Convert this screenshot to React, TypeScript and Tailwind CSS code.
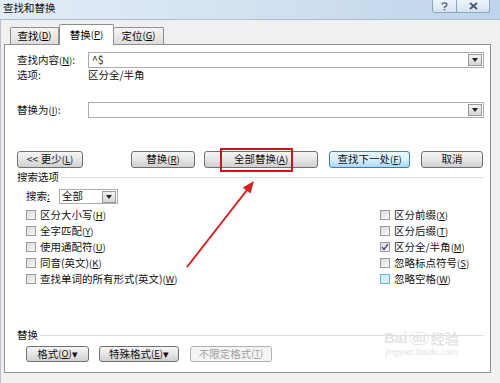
import React from "react";

const F = "font-['SimSun','Noto_Sans_CJK_SC',sans-serif]";

function U({ c }: { c: string }) {
  return (
    <span className="text-[9.5px]">
      (<span className="underline">{c}</span>)
    </span>
  );
}

function Btn({
  children,
  className = "",
  def = false,
  disabled = false,
}: {
  children: React.ReactNode;
  className?: string;
  def?: boolean;
  disabled?: boolean;
}) {
  const base =
    "flex items-center justify-center rounded-[3px] border text-[10.5px] leading-none whitespace-nowrap";
  const look = disabled
    ? "border-[#adb2b5] bg-[#f4f4f4] text-[#a0a0a0]"
    : def
    ? "border-[#3c7fb1] bg-gradient-to-b from-[#eaf6fd] via-[#d9f0fc] to-[#a7d9f5] text-[#111]"
    : "border-[#707070] bg-gradient-to-b from-[#f6f6f6] via-[#e5e5e5] to-[#d0d0d0] text-[#111]";
  return <div className={`${base} ${look} ${className}`}>{children}</div>;
}

function DropBtn() {
  return (
    <div className="w-[14px] h-[12px] mr-[1px] border border-[#9a9a9a] bg-gradient-to-b from-[#f4f4f4] to-[#d6d6d6] flex items-center justify-center">
      <svg width="6" height="4" viewBox="0 0 6 4">
        <polygon points="0,0 6,0 3,4" fill="#222" />
      </svg>
    </div>
  );
}

function Check({
  label,
  checked = false,
  hover = false,
}: {
  label: React.ReactNode;
  checked?: boolean;
  hover?: boolean;
}) {
  const box = hover
    ? "border-[#6fb6dc] bg-[#d4f0fb]"
    : "border-[#9a9a9a] bg-gradient-to-br from-[#dcdcdc] to-[#f8f8f8]";
  return (
    <div className="h-[16px] flex items-center">
      <div className={`w-[10px] h-[10px] border ${box} flex items-center justify-center`}>
        {checked && (
          <svg width="8" height="8" viewBox="0 0 8 8">
            <path d="M1 4 L3 6.5 L7 1" stroke="#4a4aa0" strokeWidth="1.4" fill="none" />
          </svg>
        )}
      </div>
      <span className="ml-[4px] text-[10.5px] leading-none text-[#111]">{label}</span>
    </div>
  );
}

export default function App() {
  return (
    <div className={`relative w-[500px] h-[383px] overflow-hidden bg-[#eef0f3] ${F}`}>
      {/* Title bar */}
      <div className="h-[20px] flex items-start justify-between bg-gradient-to-r from-[#e2ecf6] via-[#d3e2f1] to-[#bdd4ea] border-b border-[#a9bdd3]">
        <span className="mt-[3px] ml-[3px] text-[10.5px] leading-none text-[#111]">查找和替换</span>
        <div className="flex mr-[10px] h-[13px]">
          <div className="w-[25px] h-[13px] border border-t-0 border-[#8fa6c0] rounded-bl-[3px] bg-gradient-to-b from-[#eef4fa] to-[#d3e2f0] flex items-center justify-center">
            <svg width="7" height="9" viewBox="0 0 7 9">
              <path d="M1 2.5 Q1 0.8 3.5 0.8 Q6 0.8 6 2.6 Q6 3.8 4.3 4.6 Q3.5 5 3.5 6" stroke="#465a75" strokeWidth="1.3" fill="none" />
              <rect x="2.8" y="7" width="1.4" height="1.4" fill="#465a75" />
            </svg>
          </div>
          <div className="w-[33px] h-[13px] border border-l-0 border-t-0 border-[#8fa6c0] rounded-br-[3px] bg-gradient-to-b from-[#eef4fa] to-[#d3e2f0] flex items-center justify-center">
            <svg width="9" height="8" viewBox="0 0 9 8">
              <path d="M1 1 L8 7 M8 1 L1 7" stroke="#465a75" strokeWidth="1.8" fill="none" />
            </svg>
          </div>
        </div>
      </div>

      {/* Body */}
      <div className="pl-[3px] bg-[#f0f0f0] h-[363px] border-l border-[#b8c2cc]">
        {/* Tabs */}
        <div className="h-[24px] flex items-end pl-[6px] relative z-10">
          <div className="w-[49px] h-[17px] border border-b-0 border-[#8e8f8f] rounded-t-[2px] bg-gradient-to-b from-[#f4f4f4] to-[#dddddd] flex items-center justify-center text-[10.5px] leading-none">
            查找<U c="D" />
          </div>
          <div className="w-[55px] h-[21px] -mb-[1px] border border-b-0 border-[#8e8f8f] rounded-t-[2px] bg-white flex items-center justify-center text-[10.5px] leading-none">
            替换<U c="P" />
          </div>
          <div className="w-[50px] h-[17px] border border-b-0 border-l-0 border-[#8e8f8f] rounded-t-[2px] bg-gradient-to-b from-[#f4f4f4] to-[#dddddd] flex items-center justify-center text-[10.5px] leading-none">
            定位<U c="G" />
          </div>
        </div>

        {/* Panel */}
        <div className="w-[487px] h-[329px] border border-[#8e8f8f] bg-white pl-[12px] pr-[6px] pt-[7px] flex flex-col text-[10.5px] leading-none text-[#111]">
          {/* Find */}
          <div className="h-[16px] flex items-center">
            <span className="w-[71px]">
              查找内容<U c="N" />:
            </span>
            <div className="flex-1 h-[16px] border border-[#abadb3] flex items-center justify-between pl-[3px]">
              <span>^$</span>
              <DropBtn />
            </div>
          </div>
          <div className="h-[14px] flex items-center">
            <span className="w-[71px]">选项:</span>
            <span>区分全/半角</span>
          </div>
          {/* Replace */}
          <div className="mt-[20px] h-[16px] flex items-center">
            <span className="w-[71px]">
              替换为<U c="I" />:
            </span>
            <div className="flex-1 h-[16px] border border-[#abadb3] flex items-center justify-end">
              <DropBtn />
            </div>
          </div>

          {/* Buttons */}
          <div className="mt-[33px] h-[17px] flex">
            <Btn className="w-[66px]">
              &lt;&lt; 更少<U c="L" />
            </Btn>
            <Btn className="w-[64px] ml-[48px]">
              替换<U c="R" />
            </Btn>
            <Btn className="w-[114px] ml-[9px]">
              全部替换<U c="A" />
            </Btn>
            <Btn def className="w-[81px] ml-[11px]">
              查找下一处<U c="F" />
            </Btn>
            <Btn className="w-[62px] ml-[11px]">取消</Btn>
          </div>

          {/* Search options */}
          <div className="mt-[3px] h-[12px] flex items-center">
            <span>搜索选项</span>
            <div className="flex-1 ml-[2px] h-px bg-[#d5dfe5]" />
          </div>
          <div className="mt-[6px] h-[15px] flex items-center pl-[9px]">
            <span className="w-[33px]">
              搜索<span className="underline">:</span>
            </span>
            <div className="w-[59px] h-[15px] border border-[#abadb3] flex items-center justify-between pl-[2px]">
              <span>全部</span>
              <DropBtn />
            </div>
          </div>

          <div className="mt-[3px] flex pl-[9px]">
            <div className="w-[354px] flex flex-col">
              <Check label={<>区分大小写<U c="H" /></>} />
              <Check label={<>全字匹配<U c="Y" /></>} />
              <Check label={<>使用通配符<U c="U" /></>} />
              <Check label={<>同音(英文)<U c="K" /></>} />
              <Check label={<>查找单词的所有形式(英文)<U c="W" /></>} />
            </div>
            <div className="flex flex-col">
              <Check label={<>区分前缀<U c="X" /></>} />
              <Check label={<>区分后缀<U c="T" /></>} />
              <Check checked label={<>区分全/半角<U c="M" /></>} />
              <Check label={<>忽略标点符号<U c="S" /></>} />
              <Check hover label={<>忽略空格<U c="W" /></>} />
            </div>
          </div>

          {/* Replace section */}
          <div className="mt-[42px] h-[12px] flex items-center">
            <span>替换</span>
            <div className="flex-1 ml-[2px] h-px bg-[#d5dfe5]" />
          </div>
          <div className="mt-[5px] h-[16px] flex pl-[9px]">
            <Btn className="w-[63px]">
              格式<U c="O" /> ▾
            </Btn>
            <Btn className="w-[80px] ml-[10px]">
              特殊格式<U c="E" />▾
            </Btn>
            <Btn disabled className="w-[82px] ml-[11px]">
              不限定格式<U c="T" />
            </Btn>
          </div>
        </div>
      </div>

      {/* Red highlight box */}
      <div className="absolute left-[220px] top-[148px] w-[73px] h-[24px] border-2 border-[#c8161d]" />

      {/* Red arrow */}
      <svg className="absolute left-0 top-0 pointer-events-none" width="500" height="383">
        <line x1="187" y1="267" x2="247" y2="190" stroke="#d81e1e" strokeWidth="2" />
        <polygon points="254,181 250.5,193.6 242.7,187.4" fill="#d81e1e" />
      </svg>

      {/* Watermark */}
      <div className="absolute left-[384px] top-[330px] flex flex-col items-center text-[#e2e4e6] pointer-events-none">
        <div className="flex items-end font-['Liberation_Sans',sans-serif] font-bold text-[15px] leading-none">
          <span>Bai</span>
          <span className="mx-[2px] rounded-full border border-[#e2e4e6] px-[2px] text-[11px]">du</span>
          <span className={`${F} text-[14px]`}>经验</span>
        </div>
        <span className="mt-[3px] text-[9px] leading-none font-['Liberation_Sans',sans-serif]">
          jingyan.baidu.com
        </span>
      </div>
    </div>
  );
}
